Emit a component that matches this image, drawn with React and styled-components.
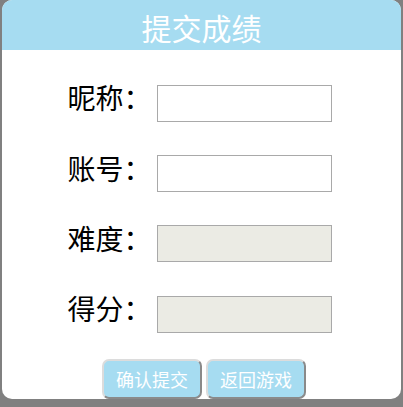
import React from 'react';
import styled, { createGlobalStyle } from 'styled-components';

const GlobalStyle = createGlobalStyle`
    html, body {
        margin: 0;
        padding: 0;
        background: #808080;
    }
`;

const Dialog = styled.div`
    width: 399px;
    height: 399px;
    margin-left: 2px;
    background: #fff;
    border-radius: 10px;
    overflow: hidden;
    box-sizing: border-box;
    display: flex;
    flex-direction: column;
    font-family: "Noto Sans CJK SC", "Noto Sans", sans-serif;
`;

const Header = styled.div`
    height: 50px;
    background: #a6dcf1;
    color: #fff;
    font-size: 30px;
    line-height: 54px;
    text-align: center;
`;

const Form = styled.div`
    display: flex;
    flex-direction: column;
    align-items: center;
    padding-top: 18px;
`;

const Row = styled.div`
    display: flex;
    align-items: center;
    height: 70.4px;
    gap: 5px;
    margin-left: -4px;
`;

const Label = styled.span`
    font-size: 28px;
    line-height: 36px;
    color: #000;
    padding-bottom: 12px;
`;

const Field = styled.input`
    width: 175px;
    height: 37px;
    box-sizing: border-box;
    border: 1px solid #a9a9a9;
    background: ${p => (p.disabled ? '#ebebe4' : '#fff')};
    margin: 0;
    padding: 0 4px;
    outline: none;
`;

const Actions = styled.div`
    display: flex;
    justify-content: center;
    gap: 4px;
    margin-top: 9px;
    padding-left: 5px;
`;

const Button = styled.button`
    width: 100px;
    height: 40px;
    box-sizing: border-box;
    background: #a6dcf1;
    color: #fff;
    font-family: "Noto Sans CJK SC", "Noto Sans", sans-serif;
    font-size: 18px;
    border: 2px solid;
    border-color: #dcdcdc #8a8a8a #8a8a8a #dcdcdc;
    border-radius: 7px;
    padding: 0;
`;

const fields = [
    { label: '昵称：', disabled: false },
    { label: '账号：', disabled: false },
    { label: '难度：', disabled: true },
    { label: '得分：', disabled: true },
];

export default function App() {
    return (
        <>
            <GlobalStyle />
            <Dialog>
                <Header>提交成绩</Header>
                <Form>
                    {fields.map((f, i) => (
                        <Row key={i}>
                            <Label>{f.label}</Label>
                            <Field disabled={f.disabled} />
                        </Row>
                    ))}
                </Form>
                <Actions>
                    <Button>确认提交</Button>
                    <Button>返回游戏</Button>
                </Actions>
            </Dialog>
        </>
    );
}
